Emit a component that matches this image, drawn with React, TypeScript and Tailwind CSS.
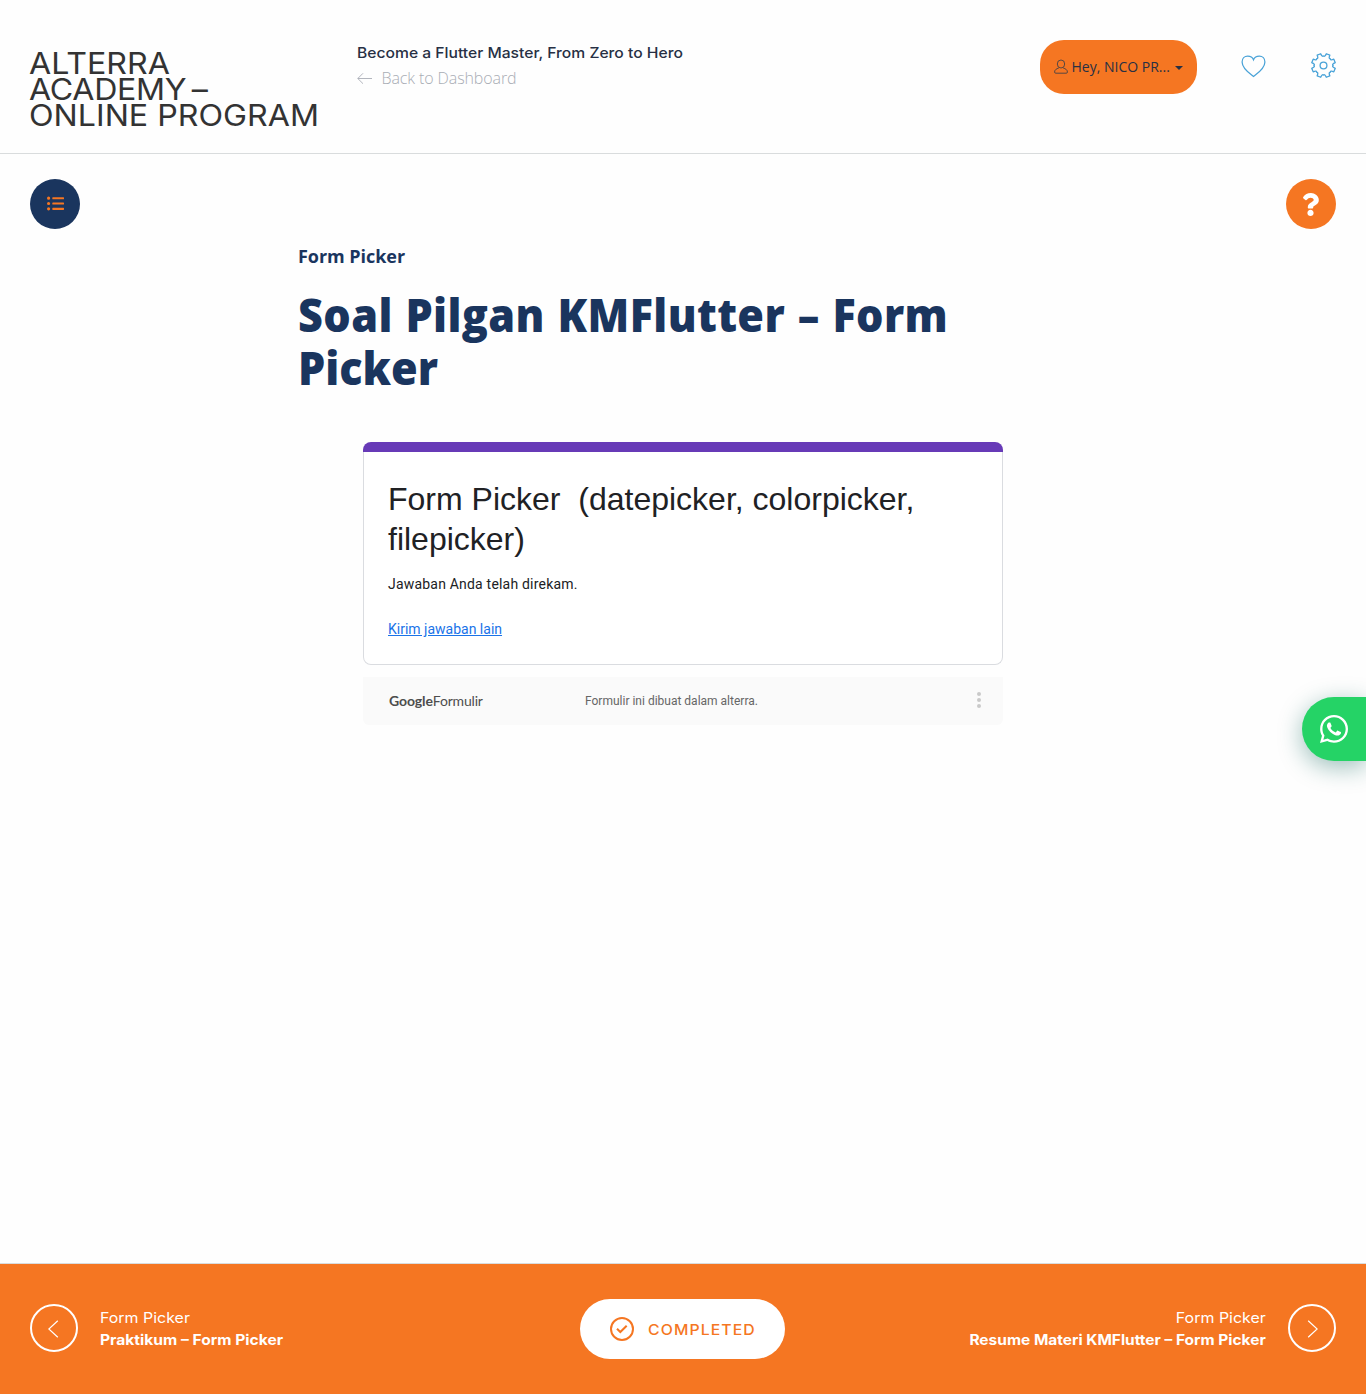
import { FaListUl, FaQuestion, FaWhatsapp } from "react-icons/fa";

const gearPath = (() => {
  const pts: string[] = [];
  const c = 12.5;
  const at = (r: number, deg: number) => {
    const a = (deg * Math.PI) / 180;
    return `${(c + r * Math.sin(a)).toFixed(2)} ${(c - r * Math.cos(a)).toFixed(2)}`;
  };
  for (let i = 0; i < 8; i++) {
    const d = i * 45 + 22.5;
    pts.push(`${i === 0 ? "M" : "L"}${at(12.1, d - 9)}`);
    pts.push(`L${at(12.1, d + 9)}`);
    pts.push(`Q${at(8.2, d + 14)} ${at(9.6, d + 22.5)}`);
    pts.push(`Q${at(8.2, d + 31)} ${at(12.1, d + 36)}`);
  }
  return pts.join("") + "Z";
})();

function UserIcon() {
  return (
    <svg width="14" height="16" viewBox="0 0 14 16" fill="none" stroke="#2f3b4a" strokeWidth="0.8">
      <ellipse cx="7" cy="5" rx="3.7" ry="4" />
      <path d="M4.800 9C2.300 9.800.6 10.900.6 13c0 .8.4 1.200 1.100 1.200h10.600c.7 0 1.100-.4 1.100-1.200 0-2.100-1.700-3.200-4.200-4" />
    </svg>
  );
}

function HeartIcon() {
  return (
    <svg width="26" height="24" viewBox="0 0 26 24" fill="none" stroke="#4aa3d8" strokeWidth="1.25">
      <path d="M12.500 22.500C10 20.400 1.100 15 1.100 8C1.100 4.500 3.500 2.100 6.700 2.100C9.300 2.100 11.600 3.500 12.500 5.800C13.400 3.500 15.700 2.100 18.300 2.100C21.500 2.100 23.900 4.500 23.900 8C23.900 15 15 20.400 12.500 22.500Z" />
    </svg>
  );
}

function GearIcon() {
  return (
    <svg width="25" height="25" viewBox="0 0 25 25" fill="none" stroke="#4aa3d8" strokeWidth="1.3" strokeLinejoin="round">
      <path d={gearPath} />
      <circle cx="12.5" cy="12.5" r="3.4" />
    </svg>
  );
}

function Header() {
  return (
    <header className="flex h-[154px] items-start border-b border-[#d9dcdd] px-[30px]">
      <div className="w-[327px] shrink-0 pt-[50px]">
        <div className="-ml-px w-max origin-left scale-x-[1.09] font-['Inter',sans-serif] text-[29.5px] leading-[26px] text-[#333]">
          <div>ALTERRA</div>
          <div className="tracking-[-0.3px] [word-spacing:-3px]">ACADEMY –</div>
          <div>ONLINE PROGRAM</div>
        </div>
      </div>
      <div className="grow pt-[42px]">
        <div className="w-max origin-left scale-x-[1.08] font-['Inter',sans-serif] text-[14.5px] leading-[22px] font-medium text-[#273044]">
          Become a Flutter Master, From Zero to Hero
        </div>
        <div className="flex items-center pt-[3px] font-['Open_Sans',sans-serif] text-[16px] leading-[22px] font-light tracking-[-0.1px] text-[#a9adb5]">
          <svg width="15" height="12" viewBox="0 0 15 12" fill="none" stroke="#a9adb5" className="mr-[9.500px]">
            <path d="M15 6.500H.8M6 1.300L.8 6.500L6 11.700" strokeWidth="0.9" />
          </svg>
          Back to Dashboard
        </div>
      </div>
      <button className="mt-10 flex h-[54px] w-[157px] items-center rounded-[24px] bg-[#f57622] pb-[2px] pl-[13.5px] font-['Open_Sans',sans-serif] text-[14px] text-[#273044]">
        <span className="mt-[2px]">
          <UserIcon />
        </span>
        <span className="ml-1 w-[98px] whitespace-nowrap">Hey, NICO PR...</span>
        <span className="ml-[5px] mt-[4px] border-x-4 border-t-4 border-x-transparent border-t-[#273044]" />
      </button>
      <div className="ml-11 mt-[54px]">
        <HeartIcon />
      </div>
      <div className="ml-11 mt-[53px]">
        <GearIcon />
      </div>
    </header>
  );
}

function FormCard() {
  return (
    <div className="mx-auto mt-[48px] w-[640px]">
      <div className="h-[10px] rounded-t-lg bg-[#673ab7]" />
      <div className="h-[213px] rounded-b-lg border border-t-0 border-[#dadce0] bg-white px-6 pt-[27px]">
        <h2 className="font-['Liberation_Sans',Arial,sans-serif] text-[32px] leading-10 whitespace-pre text-[#202124]">
          {"Form Picker  (datepicker, colorpicker,\nfilepicker)"}
        </h2>
        <p className="mt-[15px] font-['Roboto',sans-serif] text-[14px] leading-5 tracking-[0.2px] text-[#202124]">
          Jawaban Anda telah direkam.
        </p>
        <a className="mt-[25px] block w-max font-['Roboto',sans-serif] text-[14px] leading-5 text-[#1a73e8] underline">
          Kirim jawaban lain
        </a>
      </div>
      <div className="mt-3 flex h-12 items-center rounded-b-md bg-[#fafafa] pl-[26px] pr-[22px]">
        <div className="w-[196px] pb-[2px] font-['Lato',sans-serif] text-[14px] text-[#4d4d4d]">
          <span className="font-bold tracking-[-0.1px]">Google</span>
          <span className="tracking-[-0.2px]">Formulir</span>
        </div>
        <span className="grow font-['Roboto',sans-serif] text-[12px] text-[#666]">Formulir ini dibuat dalam alterra.</span>
        <div className="flex flex-col gap-[2px] pb-[2px]">
          <i className="size-1 rounded-full bg-[#c9c9c9]" />
          <i className="size-1 rounded-full bg-[#c9c9c9]" />
          <i className="size-1 rounded-full bg-[#c9c9c9]" />
        </div>
      </div>
    </div>
  );
}

function Chevron({ d }: { d: string }) {
  return (
    <div className="flex size-12 items-center justify-center rounded-full border-2 border-white">
      <svg width="12" height="18" viewBox="0 0 12 18" fill="none" stroke="white" strokeWidth="1.2" className="mt-[2px]">
        <path d={d} />
      </svg>
    </div>
  );
}

function Footer() {
  return (
    <footer className="grid h-[131px] grid-cols-[550px_205px_1fr] items-center border-t border-[#d9dcdd] bg-[#f57622] px-[30px] font-['Inter',sans-serif] text-[14.5px] leading-[22px] text-white">
      <div className="flex items-center gap-[22px] pb-[2px]">
        <Chevron d="M9.800.8L.8 9L9.800 17.200" />
        <div className="w-max pt-[2px]">
          <div className="w-max origin-left scale-x-[1.1]">Form Picker</div>
          <div className="w-max origin-left scale-x-[1.076] font-bold">Praktikum – Form Picker</div>
        </div>
      </div>
      <button className="flex h-[60px] items-center rounded-full bg-white pl-[30px] font-medium text-[#f57622]">
        <svg width="24" height="24" viewBox="0 0 24 24" fill="none" stroke="#f57622" strokeWidth="2">
          <circle cx="12" cy="12" r="11" />
          <path d="M7 11.700L10.300 15L16.700 8.700" />
        </svg>
        <span className="ml-[14px] mt-[2px] origin-left scale-x-[1.09] tracking-[1px]">COMPLETED</span>
      </button>
      <div className="flex items-center justify-end gap-[22px] pb-[2px]">
        <div className="flex flex-col items-end pt-[2px]">
          <div className="w-max origin-right scale-x-[1.1]">Form Picker</div>
          <div className="w-max origin-right scale-x-[1.067] font-bold">Resume Materi KMFlutter – Form Picker</div>
        </div>
        <Chevron d="M2.200.8L11.200 9L2.200 17.200" />
      </div>
    </footer>
  );
}

export default function App() {
  return (
    <div className="relative flex h-[1394px] w-[1366px] flex-col overflow-hidden bg-[#fefefe]">
      <Header />
      <main className="grow">
        <div className="flex justify-between px-[30px] pt-[25px]">
          <button className="flex size-[50px] items-center justify-center rounded-full bg-[#1a355e] pb-px text-[17px] text-[#f57622]">
            <FaListUl />
          </button>
          <button className="flex size-[50px] items-center justify-center rounded-full bg-[#f57622] pr-px text-[23px] text-white">
            <FaQuestion />
          </button>
        </div>
        <div className="mx-auto w-[770px] pt-[15px] text-[#1a355e]">
          <div className="font-['Open_Sans',sans-serif] text-[18px] leading-[24px] font-bold tracking-[-0.05px]">Form Picker</div>
          <h1 className="mt-[20px] w-max origin-left scale-x-[0.938] font-['Open_Sans',sans-serif] text-[46px] leading-[53px] font-extrabold">
            <div className="tracking-[0.4px] [word-spacing:1.2px]">Soal Pilgan KMFlutter – Form</div>
            <div>Picker</div>
          </h1>
        </div>
        <FormCard />
      </main>
      <Footer />
      <button className="absolute right-0 top-[697px] flex size-16 items-center justify-center rounded-l-full bg-[#25d366] text-[32px] text-white shadow-[0_6px_24px_rgba(7,94,84,0.4)]">
        <FaWhatsapp />
      </button>
    </div>
  );
}
